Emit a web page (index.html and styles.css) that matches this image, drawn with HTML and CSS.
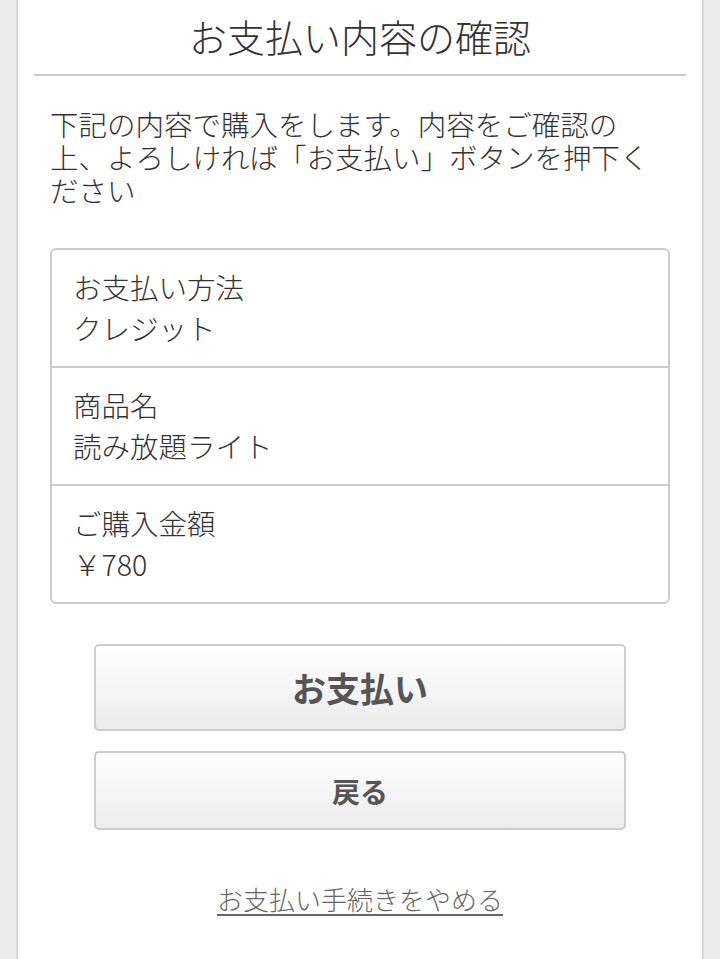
FILE: index.html
```html
<!DOCTYPE html>
<html lang="ja">
<head>
  <meta charset="UTF-8">
  <meta name="viewport" content="width=device-width, initial-scale=1.0">
  <title>お支払い内容の確認</title>
  <link rel="stylesheet" href="styles.css">
</head>
<body>
  <main class="page">
    <header class="page-header">
      <h1>お支払い内容の確認</h1>
    </header>

    <section class="content">
      <p class="lead">下記の内容で購入をします。内容をご確認の上、よろしければ「お支払い」ボタンを押下ください</p>

      <dl class="summary">
        <div class="summary-row">
          <dt>お支払い方法</dt>
          <dd>クレジット</dd>
        </div>
        <div class="summary-row">
          <dt>商品名</dt>
          <dd>読み放題ライト</dd>
        </div>
        <div class="summary-row">
          <dt>ご購入金額</dt>
          <dd>￥780</dd>
        </div>
      </dl>

      <div class="actions">
        <button type="button" class="btn btn-pay">お支払い</button>
        <button type="button" class="btn btn-back">戻る</button>
      </div>

      <p class="cancel"><a href="#">お支払い手続きをやめる</a></p>
    </section>
  </main>
</body>
</html>
```

FILE: styles.css
```css
/* base */
html,
body {
  height: 100%;
}

body {
  margin: 0;
  padding: 0;
  background-color: #ececec;
  color: #333;
  font-family: "Noto Sans CJK JP", "Noto Sans", sans-serif;
  font-weight: 300;
}

.page {
  box-sizing: border-box;
  min-height: 100%;
  margin: 0 16px;
  background-color: #fff;
  border-left: 2px solid #dcdcdc;
  border-right: 2px solid #dcdcdc;
}

/* header */
.page-header {
  margin: 0 16px;
  padding: 13px 0 15px;
  border-bottom: 2px solid #ccc;
  text-align: center;
}

.page-header h1 {
  margin: 0;
  font-size: 38px;
  font-weight: 300;
  line-height: 46px;
  color: #333;
}

/* content */
.content {
  padding: 31px 32px 40px;
}

.lead {
  margin: 0 6px 42px 0;
  font-size: 28.5px;
  line-height: 33px;
}

.summary {
  margin: 0;
  border: 2px solid #ccc;
  border-radius: 6px;
}

.summary-row {
  padding: 16px 21px 18px;
  font-size: 28.5px;
  line-height: 41px;
}

.summary-row + .summary-row {
  border-top: 2px solid #ccc;
}

.summary-row dt,
.summary-row dd {
  margin: 0;
}

/* buttons */
.actions {
  display: flex;
  flex-direction: column;
  gap: 20px;
  margin: 40px 44px 0;
}

.btn {
  display: block;
  width: 100%;
  padding: 0;
  background: linear-gradient(#fff, #ececec);
  border: 2px solid #ccc;
  border-radius: 5px;
  color: #555;
  font-family: inherit;
  font-weight: bold;
  cursor: pointer;
}

.btn-pay {
  height: 87px;
  font-size: 34px;
}

.btn-back {
  height: 79px;
  font-size: 28px;
}

/* cancel link */
.cancel {
  margin: 52px 0 0;
  text-align: center;
  font-size: 26px;
  line-height: 34px;
}

.cancel a {
  color: #666;
  text-decoration: underline;
  text-decoration-thickness: 2px;
  text-underline-offset: 4px;
}
```
